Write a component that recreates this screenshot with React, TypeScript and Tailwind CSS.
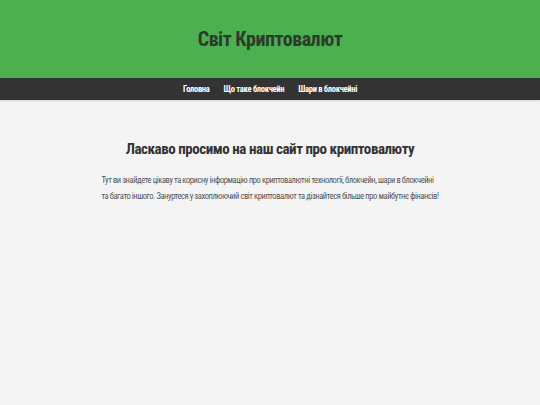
export default function App() {
  return (
    <div className="min-h-[405px] bg-[#f4f4f4] font-['Liberation_Sans_Narrow','Roboto_Condensed','DejaVu_Sans_Condensed',sans-serif]">
      <header className="h-[78px] bg-[#4caf50] flex items-center justify-center">
        <h1 className="text-[20px] font-bold text-[#2d3a2d] tracking-[-0.5px]">Світ Криптовалют</h1>
      </header>
      <nav className="h-[22px] bg-[#333333] flex items-center justify-center gap-[14px] shadow-[0_1px_2px_rgba(0,0,0,0.15)]">
        <a className="text-[8.5px] font-bold text-white tracking-[-0.3px]">Головна</a>
        <a className="text-[8.5px] font-bold text-white tracking-[-0.3px]">Що таке блокчейн</a>
        <a className="text-[8.5px] font-bold text-white tracking-[-0.3px]">Шари в блокчейні</a>
      </nav>
      <main className="pt-[38px] flex flex-col items-center">
        <h2 className="text-[15px] font-bold text-[#333333] leading-[22px] tracking-[-0.45px]">Ласкаво просимо на наш сайт про криптовалюту</h2>
        <p className="mt-[12px] text-[8.5px] leading-[16px] text-[#555555] tracking-[-0.42px] whitespace-nowrap">
          Тут ви знайдете цікаву та корисну інформацію про криптовалютні технології, блокчейн, шари в блокчейні
          <br />
          та багато іншого. Зануртеся у захоплюючий світ криптовалют та дізнайтеся більше про майбутнє фінансів!
        </p>
      </main>
    </div>
  )
}
